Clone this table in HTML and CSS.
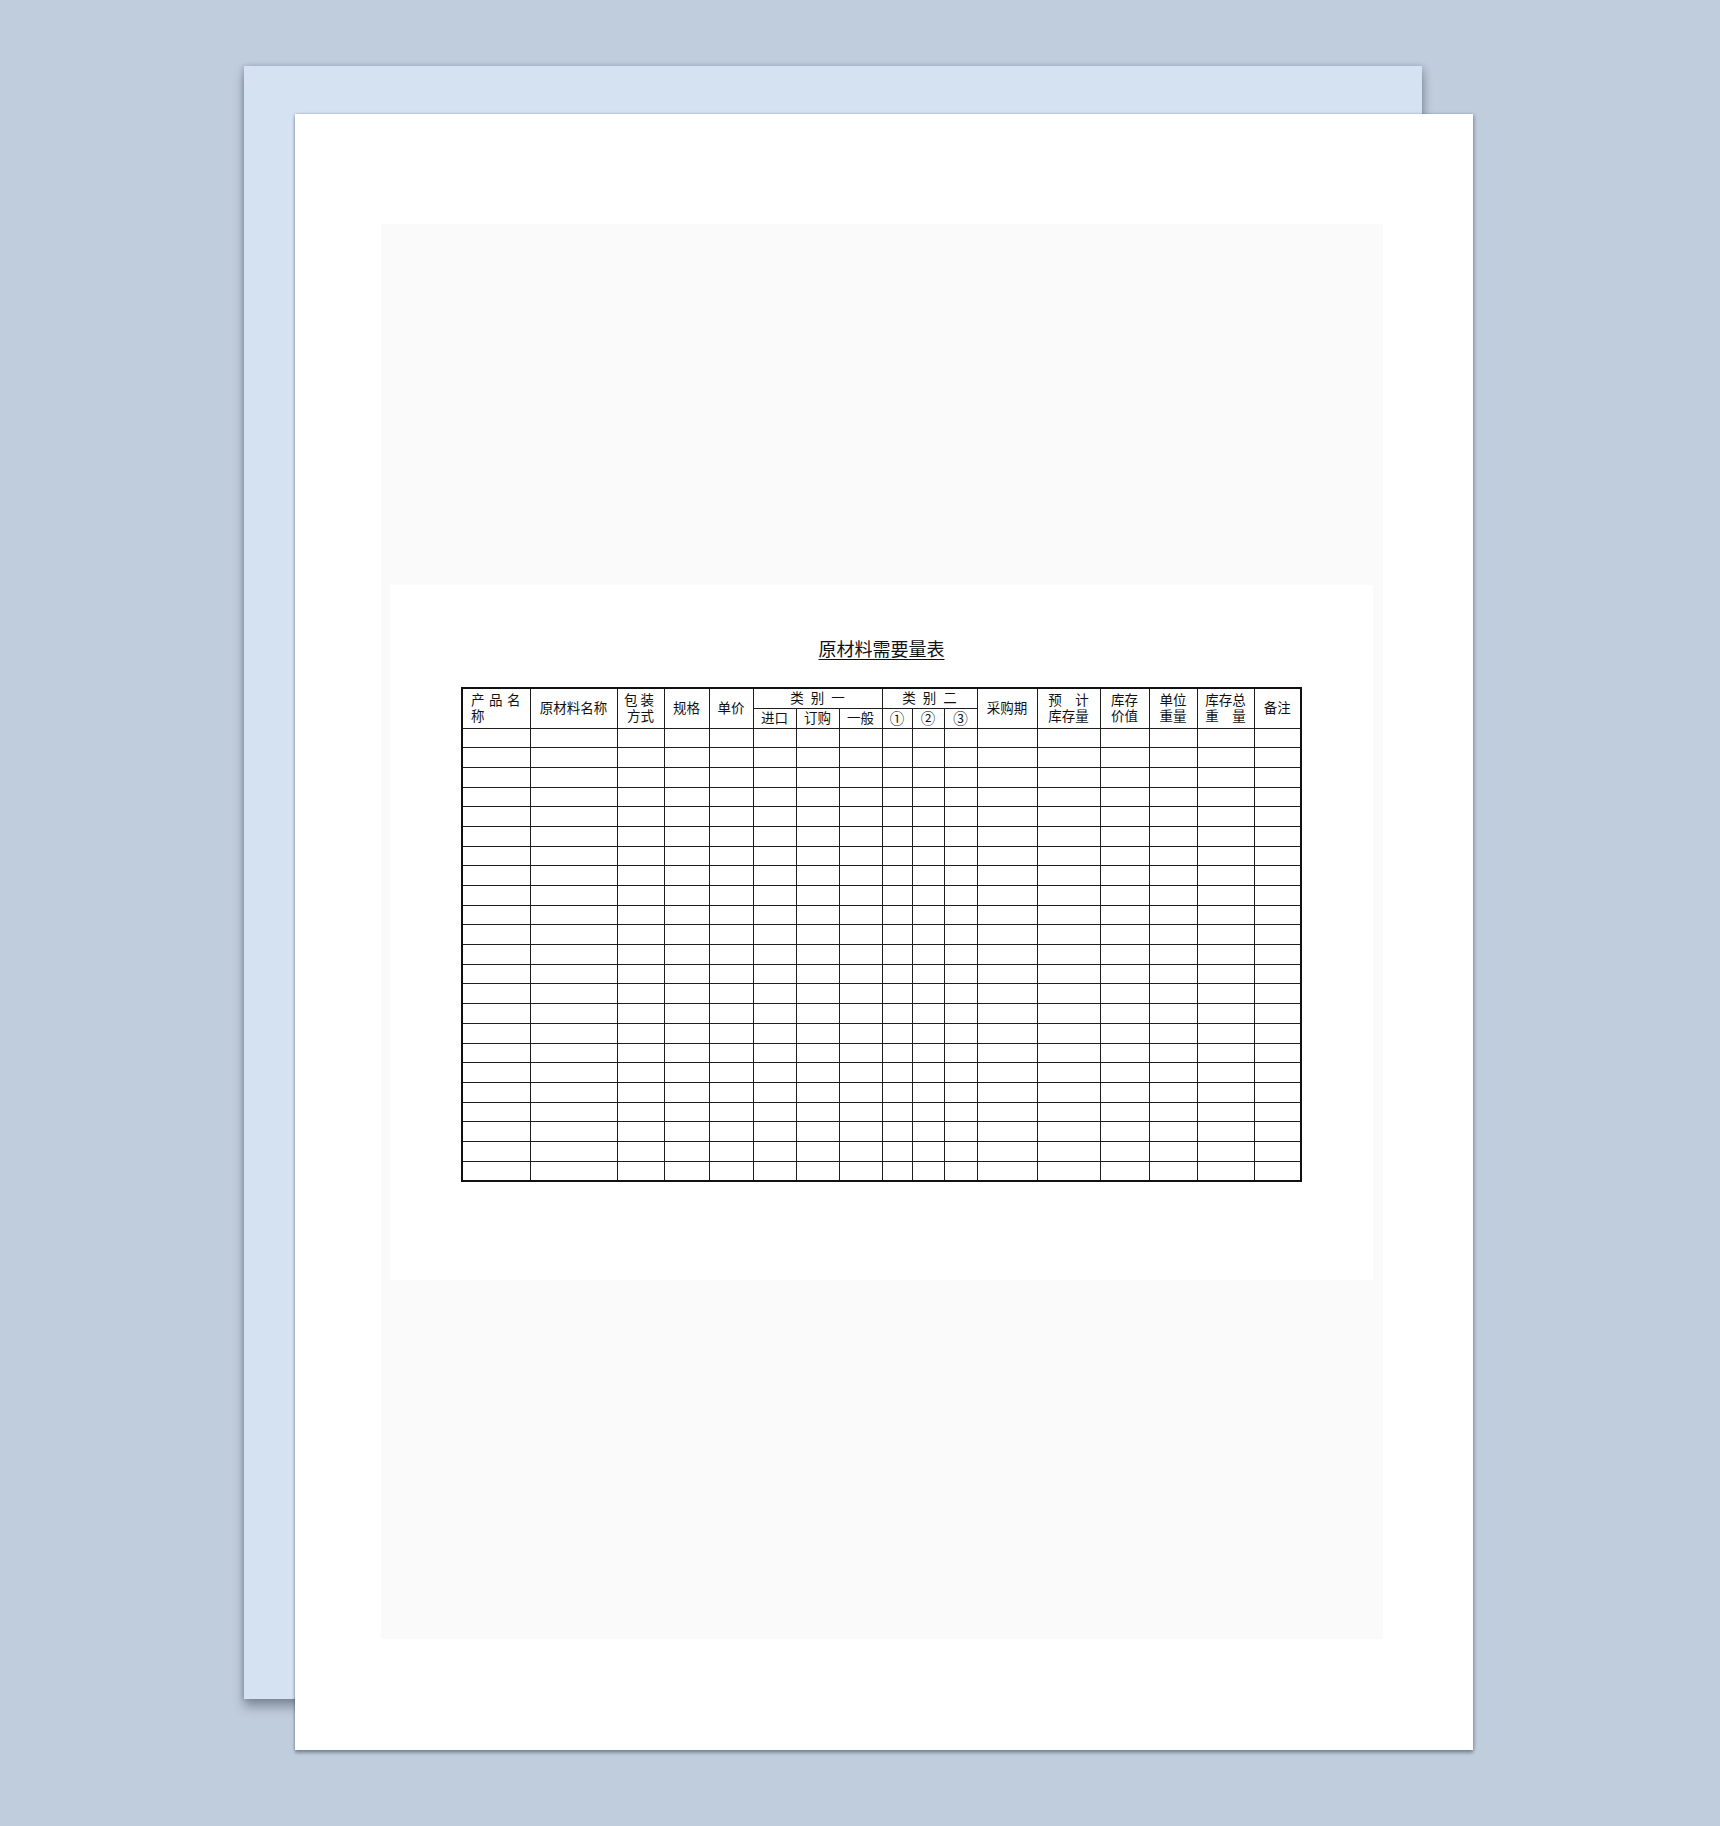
FILE: index.html
```html
<!DOCTYPE html>
<html lang="zh-CN">
<head>
<meta charset="utf-8">
<title>原材料需要量表</title>
<link rel="stylesheet" href="styles.css">
</head>
<body>
<div class="stage">
  <div class="back-sheet"></div>
  <div class="sheet">
    <div class="scan">
      <div class="doc">
        <h1 class="doc-title">原材料需要量表</h1>
        <table class="grid">
          <colgroup>
            <col class="c68"><col class="c87"><col class="c47"><col class="c45"><col class="c44">
            <col class="c43"><col class="c43"><col class="c43">
            <col class="c30"><col class="c32"><col class="c33">
            <col class="c60"><col class="c63"><col class="c49"><col class="c48"><col class="c57"><col class="c47">
          </colgroup>
          <thead>
            <tr class="hrow">
              <th rowspan="2" class="left"><span class="sp4">产品名</span><br>称</th>
              <th rowspan="2">原材料名称</th>
              <th rowspan="2"><span class="sp2">包装</span><br>方式</th>
              <th rowspan="2">规格</th>
              <th rowspan="2">单价</th>
              <th colspan="3"><span class="sp7">类别一</span></th>
              <th colspan="3"><span class="sp7">类别二</span></th>
              <th rowspan="2">采购期</th>
              <th rowspan="2">预　计<br>库存量</th>
              <th rowspan="2">库存<br>价值</th>
              <th rowspan="2">单位<br>重量</th>
              <th rowspan="2">库存总<br>重　量</th>
              <th rowspan="2">备注</th>
            </tr>
            <tr class="hrow">
              <th>进口</th><th>订购</th><th>一般</th>
              <th class="circ">①</th><th class="circ">②</th><th class="circ">③</th>
            </tr>
          </thead>
          <tbody>
            <tr><td></td><td></td><td></td><td></td><td></td><td></td><td></td><td></td><td></td><td></td><td></td><td></td><td></td><td></td><td></td><td></td><td></td></tr>
            <tr><td></td><td></td><td></td><td></td><td></td><td></td><td></td><td></td><td></td><td></td><td></td><td></td><td></td><td></td><td></td><td></td><td></td></tr>
            <tr><td></td><td></td><td></td><td></td><td></td><td></td><td></td><td></td><td></td><td></td><td></td><td></td><td></td><td></td><td></td><td></td><td></td></tr>
            <tr><td></td><td></td><td></td><td></td><td></td><td></td><td></td><td></td><td></td><td></td><td></td><td></td><td></td><td></td><td></td><td></td><td></td></tr>
            <tr><td></td><td></td><td></td><td></td><td></td><td></td><td></td><td></td><td></td><td></td><td></td><td></td><td></td><td></td><td></td><td></td><td></td></tr>
            <tr><td></td><td></td><td></td><td></td><td></td><td></td><td></td><td></td><td></td><td></td><td></td><td></td><td></td><td></td><td></td><td></td><td></td></tr>
            <tr><td></td><td></td><td></td><td></td><td></td><td></td><td></td><td></td><td></td><td></td><td></td><td></td><td></td><td></td><td></td><td></td><td></td></tr>
            <tr><td></td><td></td><td></td><td></td><td></td><td></td><td></td><td></td><td></td><td></td><td></td><td></td><td></td><td></td><td></td><td></td><td></td></tr>
            <tr><td></td><td></td><td></td><td></td><td></td><td></td><td></td><td></td><td></td><td></td><td></td><td></td><td></td><td></td><td></td><td></td><td></td></tr>
            <tr><td></td><td></td><td></td><td></td><td></td><td></td><td></td><td></td><td></td><td></td><td></td><td></td><td></td><td></td><td></td><td></td><td></td></tr>
            <tr><td></td><td></td><td></td><td></td><td></td><td></td><td></td><td></td><td></td><td></td><td></td><td></td><td></td><td></td><td></td><td></td><td></td></tr>
            <tr><td></td><td></td><td></td><td></td><td></td><td></td><td></td><td></td><td></td><td></td><td></td><td></td><td></td><td></td><td></td><td></td><td></td></tr>
            <tr><td></td><td></td><td></td><td></td><td></td><td></td><td></td><td></td><td></td><td></td><td></td><td></td><td></td><td></td><td></td><td></td><td></td></tr>
            <tr><td></td><td></td><td></td><td></td><td></td><td></td><td></td><td></td><td></td><td></td><td></td><td></td><td></td><td></td><td></td><td></td><td></td></tr>
            <tr><td></td><td></td><td></td><td></td><td></td><td></td><td></td><td></td><td></td><td></td><td></td><td></td><td></td><td></td><td></td><td></td><td></td></tr>
            <tr><td></td><td></td><td></td><td></td><td></td><td></td><td></td><td></td><td></td><td></td><td></td><td></td><td></td><td></td><td></td><td></td><td></td></tr>
            <tr><td></td><td></td><td></td><td></td><td></td><td></td><td></td><td></td><td></td><td></td><td></td><td></td><td></td><td></td><td></td><td></td><td></td></tr>
            <tr><td></td><td></td><td></td><td></td><td></td><td></td><td></td><td></td><td></td><td></td><td></td><td></td><td></td><td></td><td></td><td></td><td></td></tr>
            <tr><td></td><td></td><td></td><td></td><td></td><td></td><td></td><td></td><td></td><td></td><td></td><td></td><td></td><td></td><td></td><td></td><td></td></tr>
            <tr><td></td><td></td><td></td><td></td><td></td><td></td><td></td><td></td><td></td><td></td><td></td><td></td><td></td><td></td><td></td><td></td><td></td></tr>
            <tr><td></td><td></td><td></td><td></td><td></td><td></td><td></td><td></td><td></td><td></td><td></td><td></td><td></td><td></td><td></td><td></td><td></td></tr>
            <tr><td></td><td></td><td></td><td></td><td></td><td></td><td></td><td></td><td></td><td></td><td></td><td></td><td></td><td></td><td></td><td></td><td></td></tr>
            <tr><td></td><td></td><td></td><td></td><td></td><td></td><td></td><td></td><td></td><td></td><td></td><td></td><td></td><td></td><td></td><td></td><td></td></tr>
          </tbody>
        </table>
      </div>
    </div>
  </div>
</div>
</body>
</html>
```
FILE: styles.css
```css
html, body {
  margin: 0;
  padding: 0;
}
body {
  background: #c0cddd;
  font-family: "Liberation Serif", "Noto Sans CJK SC", serif;
}
.stage {
  position: relative;
  width: 1720px;
  height: 1826px;
  box-sizing: border-box;
  padding: 114px 0 0 295px;
}
.back-sheet {
  position: absolute;
  left: 244px;
  top: 66px;
  width: 1178px;
  height: 1633px;
  background: #d5e2f1;
  box-shadow: 0 8px 10px rgba(60, 70, 85, 0.45), 3px 0 6px rgba(60, 70, 85, 0.15), -2px 0 4px rgba(60, 70, 85, 0.15);
}
.sheet {
  position: relative;
  width: 1178px;
  height: 1636px;
  box-sizing: border-box;
  background: #ffffff;
  padding: 110px 0 0 86px;
  box-shadow: 0 3px 3px rgba(60, 70, 85, 0.45), -1px 0 2px rgba(60, 70, 85, 0.2), 2px 0 3px rgba(60, 70, 85, 0.2);
}
.scan {
  width: 1002px;
  height: 1415px;
  box-sizing: border-box;
  background: #fafafa;
  padding: 361px 0 0 9px;
}
.doc {
  width: 983px;
  height: 695px;
  box-sizing: border-box;
  background: #ffffff;
  padding-top: 53px;
  display: flex;
  flex-direction: column;
  align-items: center;
}
.doc-title {
  margin: 0 0 25px 0;
  font-family: "Liberation Serif", "Noto Sans CJK SC", serif;
  font-size: 18px;
  line-height: 24px;
  font-weight: 400;
  color: #111;
  text-decoration: underline;
  text-underline-offset: 3px;
  text-decoration-thickness: 1px;
}
.grid {
  border-collapse: collapse;
  table-layout: fixed;
  width: 839px;
  border: 2px solid #111;
  color: #111;
}
.grid th, .grid td {
  border: 1px solid #1e1e1e;
  padding: 0;
  font-family: "Liberation Serif", "Noto Sans CJK SC", serif;
  font-size: 13.5px;
  line-height: 16px;
  font-weight: 400;
  text-align: center;
  vertical-align: middle;
  white-space: nowrap;
  overflow: hidden;
}
.grid th {
  padding-top: 2px;
}
.grid th.left {
  text-align: left;
  padding-left: 8px;
}
.grid th.circ {
  font-size: 14.5px;
}
.hrow {
  height: 20px;
}
.grid tbody tr {
  height: 19.7px;
}
.sp4 { letter-spacing: 4.5px; }
.sp2 { letter-spacing: 3px; }
.sp7 { letter-spacing: 7px; margin-right: -7px; }
.c68 { width: 68px; }
.c87 { width: 87px; }
.c47 { width: 47px; }
.c45 { width: 45px; }
.c44 { width: 44px; }
.c43 { width: 43px; }
.c30 { width: 30px; }
.c32 { width: 32px; }
.c33 { width: 33px; }
.c60 { width: 60px; }
.c63 { width: 63px; }
.c49 { width: 49px; }
.c48 { width: 48px; }
.c57 { width: 57px; }
```
